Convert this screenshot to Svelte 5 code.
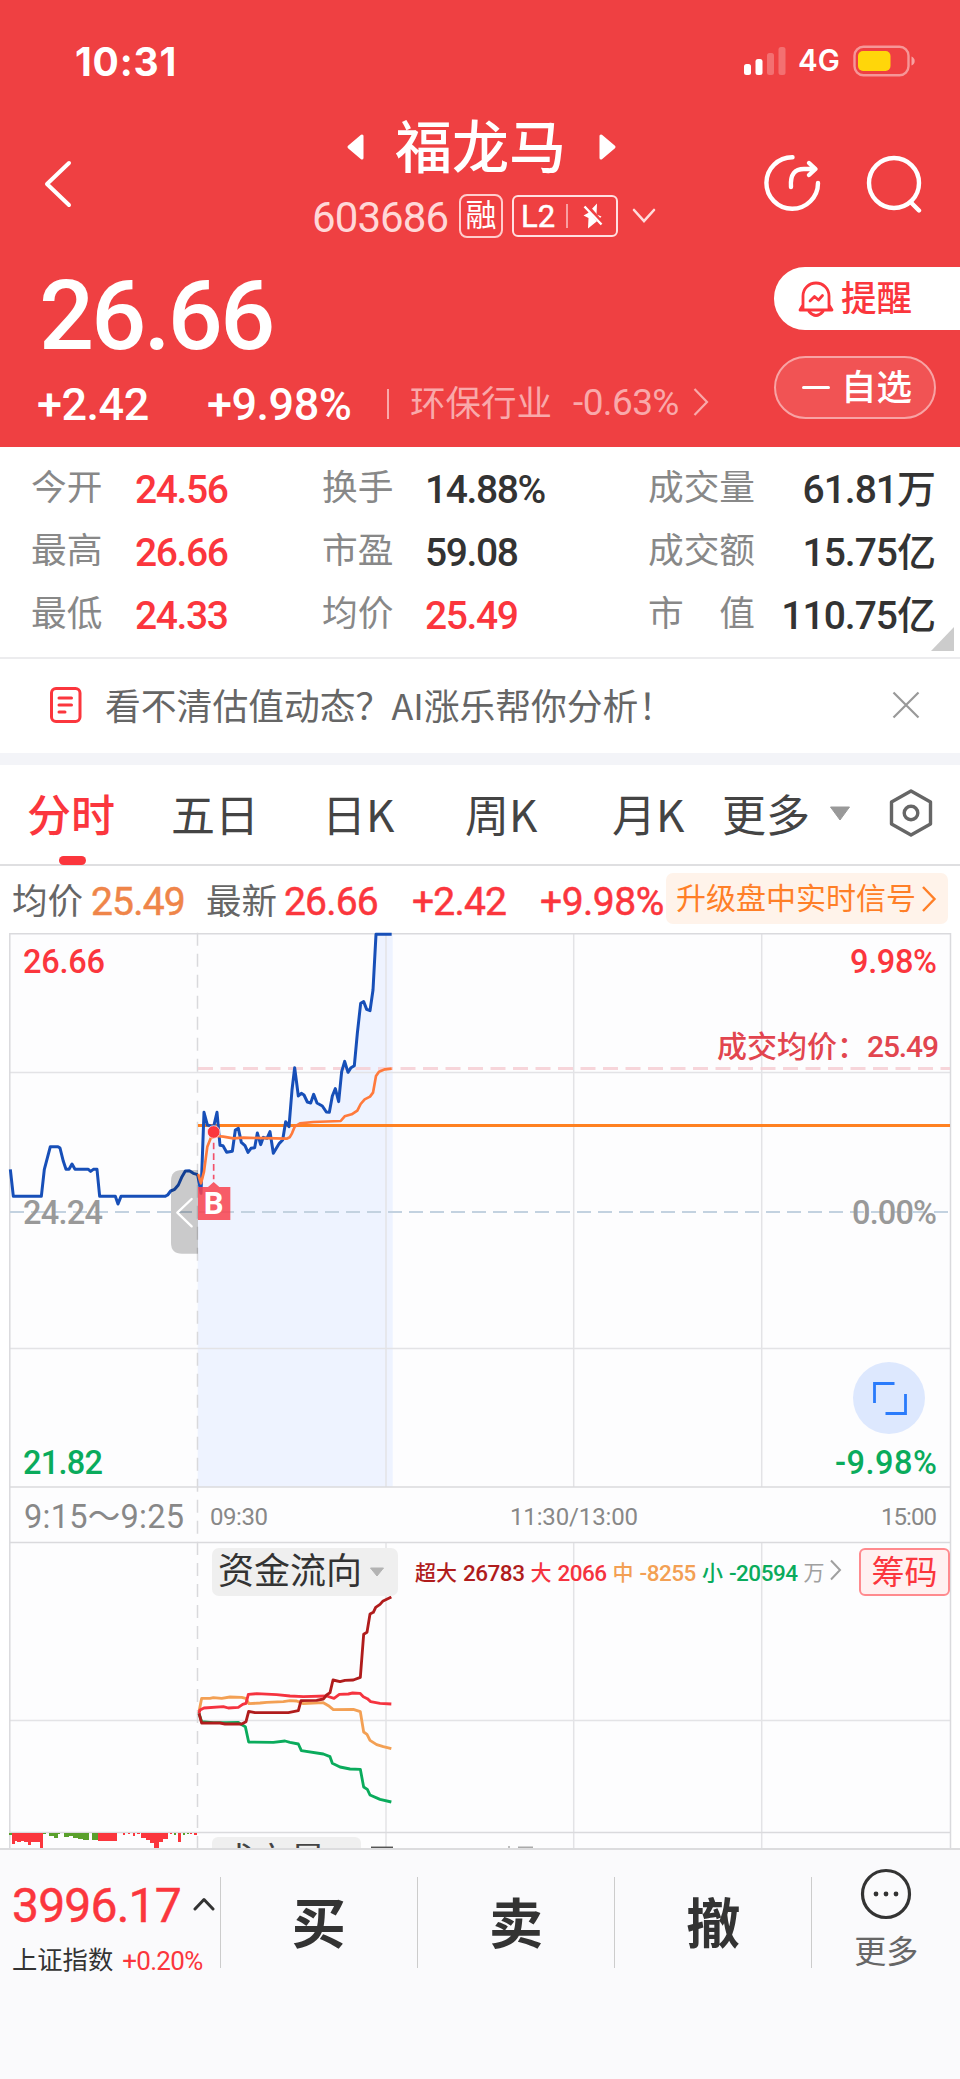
<script>
  const stats = [
    ['今开', '24.56', 'up', '换手', '14.88%', '', '成交量', '61.81万'],
    ['最高', '26.66', 'up', '市盈', '59.08', '', '成交额', '15.75亿'],
    ['最低', '24.33', 'up', '均价', '25.49', 'up', '市　值', '110.75亿']
  ];
  const tabs = ['分时', '五日', '日K', '周K', '月K', '更多'];
  const flows = [
    ['超大', '26783', '#b01c1c'],
    ['大', '2066', '#f5333f'],
    ['中', '-8255', '#f3a054'],
    ['小', '-20594', '#0aab5c']
  ];
  const actions = ['买', '卖', '撤'];

  const auction =
    '31,748 40,829 124,829 133,748 151,680 174,680 180,684 190,724 198,748 207,748 216,732 225,748 265,748 272,754 280,748 291,748 299,829 346,829 354,852 363,829 495,829 503,825 512,813 524,808 535,795 546,770 556,753 568,752 580,760 593,764';
  const price =
    '593,764 603,820 612,577 622,615 641,620 651,577 660,676 669,677 680,697 697,694 706,630 715,625 724,667 735,677 744,697 753,685 764,683 772,639 782,674 790,652 801,655 810,635 820,700 838,670 848,660 857,605 867,620 876,510 884,443 895,528 904,520 912,525 922,546 932,549 941,523 951,549 967,558 979,576 988,577 997,528 1006,506 1016,545 1025,455 1034,424 1044,457 1053,443 1063,437 1072,340 1082,250 1091,245 1100,268 1110,272 1119,210 1128,43 1175,43';
  const average =
    '594,762 603,790 612,755 622,680 632,655 650,648 670,650 700,655 730,653 860,656 869,652 876,640 884,620 900,610 940,606 1022,603 1034,589 1055,583 1072,572 1082,552 1094,538 1110,530 1119,518 1128,468 1137,455 1155,448 1175,446';
  const flowLines = [
    ['#0aab5c', '57,520 65,545 100,548 140,548 175,547 183,553 196,560 206,606 280,607 315,603 330,607 355,612 364,632 430,642 450,650 457,670 480,681 510,687 541,688 551,741 562,748 570,765 600,778 634,786'],
    ['#f3a054', '57,515 65,475 90,475 100,473 125,475 150,471 185,472 197,475 207,491 240,489 260,487 310,485 330,482 350,483 370,491 430,488 448,499 460,509 520,508 541,515 551,576 561,583 570,601 590,614 610,620 634,626'],
    ['#f5333f', '57,520 60,510 72,504 130,500 145,504 175,502 188,493 198,490 205,463 230,461 290,464 330,468 370,470 440,468 462,475 478,463 505,462 518,459 540,460 550,470 562,476 572,485 600,490 634,492'],
    ['#b01c1c', '57,520 65,549 120,549 135,552 185,552 198,545 206,514 225,518 325,518 355,512 363,482 410,481 430,477 440,465 450,458 459,420 480,425 495,421 520,420 541,412 551,283 561,277 570,222 580,217 587,202 600,193 608,184 634,171']
  ];
  const red = '#fb363d';
  const green = '#5aa02c';
  const volumes = [
    [9, 3, 2, green], [12, 3, 11, red], [15, 2, 8, red], [17, 4, 9, red], [21, 3, 8, red], [24, 4, 9, red],
    [28, 3, 12, red], [31, 9, 9, red], [40, 3, 15, red], [43, 3, 1, green], [49, 5, 3, green], [54, 4, 5, green],
    [58, 2, 1, green], [64, 5, 4, green], [69, 4, 3, green], [73, 5, 5, green], [78, 5, 6, green], [83, 6, 7, green],
    [92, 6, 7, green], [98, 19, 8, red], [123, 2, 2, red], [128, 2, 1, red], [133, 2, 3, red], [137, 3, 1, red],
    [141, 5, 5, red], [146, 4, 7, red], [150, 4, 10, red], [154, 5, 15, red], [159, 4, 9, red], [163, 5, 6, red],
    [170, 2, 1, red], [174, 2, 2, green], [178, 3, 9, red], [183, 2, 2, green], [187, 2, 1, green], [190, 2, 1, red], [194, 3, 2, red]
  ];
</script>

<main>
  <header>
    <div class="status">
      <span class="time">10:31</span>
      <div class="signals">
        <svg width="42" height="30" viewBox="744 46 42 30" fill="#fff">
          <rect x="744" y="64" width="7" height="11" rx="2.5" />
          <rect x="755.5" y="59" width="7" height="16" rx="2.5" />
          <rect x="767" y="53" width="7" height="22" rx="2.5" opacity=".25" />
          <rect x="778.5" y="47" width="7" height="28" rx="2.5" opacity=".25" />
        </svg>
        <span class="net">4G</span>
        <svg width="62" height="32" viewBox="853 45 62 32">
          <rect x="854.5" y="46.8" width="54" height="28.4" rx="9" fill="none" stroke="#fff" stroke-opacity=".45" stroke-width="2.4" />
          <rect x="858" y="51" width="32.5" height="20" rx="5" fill="#ffd60a" />
          <path d="M911.5 56.5q3.2 1.5 3.2 4.5t-3.2 4.500z" fill="#fff" opacity=".5" />
        </svg>
      </div>
    </div>

    <div class="nav">
      <svg class="back" width="32" height="52" viewBox="42 158 32 52" fill="none" stroke="#fff" stroke-width="4" stroke-linecap="round" stroke-linejoin="round">
        <path d="M69 163 47 184l22 21" />
      </svg>
      <div class="center">
        <div class="title">
          <svg width="20" height="28" viewBox="0 0 20 28"><path d="M16 3v22L3 14z" fill="#fff" stroke="#fff" stroke-width="3" stroke-linejoin="round" /></svg>
          <h1>福龙马</h1>
          <svg width="20" height="28" viewBox="0 0 20 28"><path d="M4 3v22l13-11z" fill="#fff" stroke="#fff" stroke-width="3" stroke-linejoin="round" /></svg>
        </div>
        <div class="code">
          <span class="num">603686</span>
          <span class="badge">融</span>
          <span class="level">
            <b>L2</b><i></i>
            <svg width="20" height="26" viewBox="0 0 20 26">
              <path d="M14 .5 5 10l-4.500 2.500 5 2.500-.5 10.500L13 19l5.500-5.500-5-2z" fill="#fff" />
              <path d="M2.500 1.500 19 20.500" stroke="#ef4042" stroke-width="4.500" />
              <path d="M1.500 3.500 18.500 21.500" stroke="#fff" stroke-width="2.400" />
            </svg>
          </span>
          <svg width="24" height="16" viewBox="0 0 24 16" fill="none" stroke="#ffdcdc" stroke-width="2.600" stroke-linecap="round"><path d="m2 2 10 11L22 2" /></svg>
        </div>
      </div>
      <div class="tools">
        <svg width="60" height="60" viewBox="762 153 60 60" fill="none" stroke="#fff" stroke-width="4.400" stroke-linecap="round" stroke-linejoin="round">
          <path d="M792.500 157.200A25.800 25.800 0 1 0 818 183" />
          <path d="M791 187c-1-13 4-18 13-18h11M809 163l6.500 6-6.500 6" />
        </svg>
        <svg width="60" height="60" viewBox="865 153 60 60" fill="none" stroke="#fff" stroke-width="4.400" stroke-linecap="round">
          <circle cx="894" cy="183" r="25" /><path d="m911.500 203 7.500 7.500" />
        </svg>
      </div>
    </div>

    <div class="quote">
      <div>
        <div class="price num">26.66</div>
        <div class="change">
          <span class="num">+2.42</span>
          <span class="num">+9.98%</span>
          <i></i>
          <span class="sector">环保行业</span>
          <span class="num pct">-0.63%</span>
          <svg width="16" height="30" viewBox="0 0 16 30" fill="none" stroke="#f9a9aa" stroke-width="2.200"><path d="m1.500 2 12.500 13-12.500 13" /></svg>
        </div>
      </div>
      <div class="pills">
        <button class="alert">
          <svg width="36" height="38" viewBox="0 0 36 38" fill="none" stroke="#fb363d" stroke-width="2.800" stroke-linecap="round" stroke-linejoin="round">
            <path d="M5 29V16a13 13 0 0 1 26 0v13M5 25l-3 5h32l-3-5" /><path d="M11 31.500q7 8 14 0" /><path d="m12 21 4.500-4.500 4 3.500 4-4.500" />
          </svg>
          提醒
        </button>
        <button class="fav"><i></i>自选</button>
      </div>
    </div>
  </header>

  <section class="stats">
    {#each stats as s}
      <span>{s[0]}</span><b class={s[2]}>{s[1]}</b>
      <span>{s[3]}</span><b class={s[5]}>{s[4]}</b>
      <span>{s[6]}</span><b class="end">{s[7]}</b>
    {/each}
    <i class="corner"></i>
  </section>

  <section class="tip">
    <svg width="34" height="38" viewBox="0 0 34 38" fill="none" stroke="#fb363d" stroke-width="3" stroke-linecap="round">
      <rect x="2.500" y="2.500" width="28.500" height="33" rx="4.500" /><path d="M10 12h12.500M10 19h12.500M10 26h6" />
    </svg>
    <p>看不清估值动态？AI涨乐帮你分析！</p>
    <svg width="28" height="28" viewBox="0 0 28 28" stroke="#999" stroke-width="2.200"><path d="m1.500 1.500 25 25M26.500 1.500l-25 25" /></svg>
  </section>

  <nav class="tabs">
    {#each tabs as t, i}<span class:active={i === 0}>{t}</span>{/each}
    <svg class="tri" width="22" height="15" viewBox="0 0 22 15"><path d="M1.500 1h19L11 14z" fill="#999" stroke="#999" stroke-linejoin="round" /></svg>
    <svg width="44" height="48" viewBox="0 0 44 48" fill="none" stroke="#666" stroke-width="3.400" stroke-linejoin="round">
      <path d="M22 2 41.500 13v22L22 46 2.500 35V13z" /><circle cx="22" cy="24" r="6.800" />
    </svg>
  </nav>

  <section class="latest">
    <span>均价</span><b class="avg">25.49</b>
    <span>最新</span><b>26.66</b><b>+2.42</b><b class="wide">+9.98%</b>
    <a class="upgrade" href="#signal">升级盘中实时信号<svg width="16" height="28" viewBox="0 0 16 28" fill="none" stroke="#ff7f27" stroke-width="2.400"><path d="m2 2 11.500 12L2 26" /></svg></a>
  </section>

  <section class="chart">
    <svg width="960" height="917" viewBox="0 931 960 917">
      <rect x="10" y="934" width="940" height="914" fill="#fdfdfe" />
      <g transform="translate(0 920) scale(.333333)">
        <path d="M{price} 1178,43 1178,1700 593,1700z" fill="#eef3ff" />
      </g>
      <g stroke="#e3e3e6" stroke-width="1.500" fill="none">
        <path d="M386 934v553M573.700 934v553M761.700 934v553M386 1542v306M573.700 1542v306M761.700 1542v306M10 1072.500h940M10 1348.500h940M10 1720.500h940" />
        <path d="M197.500 932.700V1542" stroke-dasharray="13 8" stroke="#d9d9dc" /><path d="M197.500 1542v306" stroke-dasharray="13 8" stroke="#d9d9dc" />
        <path d="M9.800 1848V933.800h940.700V1848M10 1487h940M10 1542.500h940M10 1832.500h940" stroke="#dadadd" />
      </g>
      <path d="M198 1068.500h752" stroke="#f7cfd4" stroke-width="3" stroke-dasharray="15 7.500" opacity=".85" />
      <path d="M10 1212h940" stroke="#c3d2e0" stroke-width="2" stroke-dasharray="14 7" />
      <path d="M198 1125.500h752" stroke="#ff8121" stroke-width="3" />

      <g class="lbl">
        <text x="23" y="972.500" fill="#fb363d" textLength="82">26.66</text>
        <text x="23" y="1223.500" fill="#999" textLength="80">24.24</text>
        <text x="23" y="1473.500" fill="#0aab5c" textLength="80">21.82</text>
        <text x="850" y="972.500" fill="#fb363d" textLength="87">9.98%</text>
        <text x="852" y="1223.500" fill="#999" textLength="85">0.00%</text>
        <text x="835" y="1473.500" fill="#0aab5c" textLength="102">-9.98%</text>
        <text x="24" y="1528" fill="#888" textLength="160" class="thin">9:15～9:25</text>
        <text x="210" y="1525" fill="#888" textLength="58" class="small">09:30</text>
        <text x="510" y="1525" fill="#888" textLength="128" class="small">11:30/13:00</text>
        <text x="881" y="1525" fill="#888" textLength="56" class="small">15:00</text>
        <text x="717" y="1056.500" fill="#e2454f" class="mid">成交均价：</text>
        <text x="867" y="1056.500" fill="#e2454f" textLength="72" class="mid">25.49</text>
      </g>

      <g transform="translate(0 920) scale(.333333)" fill="none" stroke-linejoin="round" stroke-width="9">
        <path d="M{auction}" stroke="#174fb8" />
        <path d="M{price}" stroke="#174fb8" />
        <path d="M{average}" stroke="#ff7a3c" stroke-width="8" />
        <path d="M641 668v110" stroke="#f2506a" stroke-width="5" stroke-dasharray="20 12" />
        <path d="M594 801h30l17-15 17 15h33v99h-97z" fill="#f8424f" fill-opacity=".86" stroke="none" />
        <circle cx="641" cy="636" r="19" fill="#fb363d" stroke="#fff" stroke-opacity=".7" stroke-width="3" />
        <path d="M594 750h-48q-33 0-33 33v185q0 33 33 33h48z" fill="#000" fill-opacity=".2" stroke="none" />
        <path d="m575 837-43 41 43 41" stroke="#fff" stroke-width="7" stroke-linecap="round" />
      </g>
      <text x="213.600" y="1214" text-anchor="middle" class="flag">B</text>

      <circle cx="889" cy="1398" r="36" fill="#dde8fe" />
      <path d="M874.500 1403v-19.500h20M905.500 1394v19.500h-20" fill="none" stroke="#2a7bfb" stroke-width="2.800" />

      <g transform="translate(180 1540) scale(.333333)" fill="none" stroke-width="8.500" stroke-linejoin="round">
        {#each flowLines as [color, pts]}<path d="M{pts}" stroke={color} />{/each}
      </g>

      {#each volumes as [x, w, h, color]}<rect {x} y="1833" width={w} height={h} fill={color} />{/each}
      <rect x="212" y="1837" width="149" height="30" rx="6" fill="#efefef" />
      <text x="218" y="1874" class="vol">成交量</text>
      <path d="M371 1847.300h22" stroke="#555" stroke-width="1.500" />
      <path d="M509 1846v2M518 1847.300h15" stroke="#aaa" stroke-width="1.500" />
    </svg>

    <div class="flow">
      <span class="pick">资金流向<svg width="16" height="10" viewBox="0 0 16 10"><path d="M1.500 1h13L8 9z" fill="#b3b3b3" stroke="#b3b3b3" stroke-linejoin="round" /></svg></span>
      <div class="legend">
        {#each flows as [name, value, color]}
          <span style:color>{name}</span><em style:color>{value}</em>
        {/each}
        <span class="unit">万</span>
        <svg width="13" height="22" viewBox="0 0 13 22" fill="none" stroke="#a0a0a0" stroke-width="2"><path d="m2 1.500 9 9.500-9 9.500" /></svg>
      </div>
      <span class="chips">筹码</span>
    </div>
  </section>

  <footer>
    <div class="index">
      <div class="top"><b>3996.17</b><svg width="22" height="14" viewBox="0 0 22 14" fill="none" stroke="#333" stroke-width="3" stroke-linecap="round" stroke-linejoin="round"><path d="m2 12 9-9.500L20 12" /></svg></div>
      <div class="sub">上证指数<em>+0.20%</em></div>
    </div>
    {#each actions as a}<button>{a}</button>{/each}
    <div class="more">
      <svg width="54" height="54" viewBox="0 0 54 54" fill="#333">
        <circle cx="27" cy="27" r="23.500" fill="none" stroke="#333" stroke-width="3.200" /><circle cx="17" cy="27" r="2.400" /><circle cx="27" cy="27" r="2.400" /><circle cx="37" cy="27" r="2.400" />
      </svg>
      更多
    </div>
  </footer>
</main>

<style>
  :global(body) { background: #fff; }
  * { box-sizing: border-box; }
  main { width: 960px; height: 2079px; overflow: hidden; font-family: Roboto, 'Noto Sans CJK SC', sans-serif; color: #333; background: #fff; }
  svg { display: block; flex: none; }
  button { border: 0; background: none; font: inherit; color: inherit; padding: 0; }
  b, em, i { font-style: normal; }

  header { height: 447px; background: #ef4042; color: #fff; }
  .status { height: 94px; padding: 28px 45px 0 75px; display: flex; justify-content: space-between; align-items: center; }
  .time { font: 700 39px/1 Inter, sans-serif; letter-spacing: .8px; }
  .signals { display: flex; align-items: center; }
  .net { font: 600 29.500px/1 Inter, sans-serif; width: 67px; padding-left: 12px; letter-spacing: 0; }
  .nav { height: 173px; display: grid; grid-template-columns: 312px 348px 1fr; }
  .back { margin: 64px 0 0 42px; }
  .center { padding-top: 18px; }
  .title { height: 70px; margin-left: 34px; display: flex; align-items: center; }
  h1 { margin: 0 30px 0 29px; padding-top: 3px; font-size: 57px; line-height: 70px; font-weight: 500; width: 172px; }
  .code { height: 44px; margin-top: 12px; display: flex; align-items: center; }
  .code .num { font-size: 42px; letter-spacing: -.9px; width: 147px; color: #ffd8d8; padding-top: 3px; }
  .badge { width: 44px; height: 44px; border: 2px solid #ffcdcd; border-radius: 8px; font-size: 31px; line-height: 40px; text-align: center; }
  .level { width: 106px; height: 42px; margin: 0 14px 0 9px; border: 2px solid #ffe0e0; border-radius: 6px; display: flex; align-items: center; padding-left: 7px; }
  .level b { font-size: 31px; font-weight: 400; -webkit-text-stroke: .5px; width: 45px; line-height: 38px; padding-top: 1px; }
  .level i { width: 2px; height: 24px; background: #f9a0a1; margin-right: 15px; }
  .tools { display: flex; gap: 43px; padding: 59px 0 0 102px; }

  .quote { height: 180px; display: flex; justify-content: space-between; }
  .price { height: 95px; padding: 2px 0 0 39px; font-size: 97px; line-height: 95px; font-weight: 500; letter-spacing: -2.800px; }
  .change { height: 84px; padding-left: 37px; display: grid; grid-template-columns: 170px 180px 23px 163px 120px 20px; align-items: center; font-size: 45px; font-weight: 500; letter-spacing: -.5px; white-space: nowrap; }
  .change i { width: 2px; height: 30px; background: #f9a9aa; }
  .change .sector { font-size: 35.500px; font-weight: 400; letter-spacing: 0; color: #f9a9aa; padding-bottom: 7px; }
  .change .pct { font-size: 37px; font-weight: 400; color: #f9a9aa; letter-spacing: -.6px; padding-bottom: 3px; }
  .change svg { margin-top: -4px; }
  .pills { width: 186px; display: flex; flex-direction: column; gap: 26px; }
  .pills button { height: 63px; display: flex; align-items: center; font-size: 35.500px; font-weight: 500; line-height: 60px; }
  .alert { border-radius: 31px 0 0 31px; background: #fff; color: #fb363d; padding-left: 24px; gap: 7px; }
  .fav { width: 162px; border-radius: 32px; background: #f15354; border: 2px solid #f8a3a4; padding-left: 26px; gap: 11px; }
  .fav i { width: 28px; height: 3.500px; border-radius: 2px; background: #fff; }

  .stats { position: relative; height: 212px; padding: 9px 25px 0 31px; border-bottom: 2px solid #ececee; display: grid; grid-template-columns: 104px 187px 103px 223px 107px 1fr; grid-template-rows: repeat(3, 63px); align-items: center; align-content: start; }
  .stats span { font-size: 35.700px; line-height: 60px; color: #888; white-space: nowrap; }
  .stats b { font-size: 39px; line-height: 56px; font-weight: 500; letter-spacing: -1.400px; padding-top: 5px; white-space: nowrap; }
  .stats .up { color: #fb363d; }
  .stats .end { text-align: right; margin-left: -30px; letter-spacing: -1px; }
  .corner { position: absolute; right: 6px; bottom: 6px; border-left: 23px solid transparent; border-bottom: 24px solid #ccc; }

  .tip { height: 106px; padding: 0 40px 2px 49px; border-bottom: 12px solid #f3f4f8; display: flex; align-items: center; }
  .tip p { flex: 1; margin: -3px 0 0 22px; font: 400 35.800px/60px 'Noto Sans CJK SC', sans-serif; color: #666; }

  .tabs { height: 101px; padding: 0 0 3px 27px; border-bottom: 2px solid #dfdfe1; display: grid; grid-template-columns: 144px 151px 143px 147px 110px 107px 60px 44px; align-items: center; font: 400 44px/94px 'Noto Sans CJK SC', sans-serif; color: #444; white-space: nowrap; }
  .active { position: relative; color: #fb363d; font-weight: 500; }
  .active::after { content: ''; position: absolute; left: 32px; bottom: -5px; width: 27px; height: 9px; border-radius: 5px; background: #fb363d; }

  .latest { height: 65px; padding: 0 12px 0 12px; display: grid; grid-template-columns: 79px 115px 78px 128px 128px 126px 282px; align-items: center; font-size: 35.500px; color: #666; white-space: nowrap; }
  .latest b { font-size: 39px; font-weight: 400; -webkit-text-stroke: .5px; letter-spacing: -.8px; color: #fb363d; padding-top: 6px; }
  .latest .avg { color: #ef8549; }
  .latest .wide { letter-spacing: -.500px; }
  .upgrade { height: 51px; background: #fff3ea; border-radius: 7px; color: #ff7f27; font-size: 30px; line-height: 53px; text-decoration: none; display: flex; align-items: center; padding-left: 10px; gap: 5px; }

  .chart { position: relative; height: 917px; }
  .lbl { font-size: 32.500px; font-weight: 500; }
  .lbl .thin { font-weight: 400; }
  .lbl .small { font-size: 24px; font-weight: 400; }
  .lbl .mid { font-size: 30px; }
  .flag { font: 700 31px Roboto, sans-serif; fill: #fff; }
  .vol { font-size: 36px; fill: #444; }
  .flow { position: absolute; left: 212px; top: 617px; width: 738px; height: 48px; display: flex; align-items: center; justify-content: space-between; white-space: nowrap; }
  .pick { width: 186px; height: 48px; border-radius: 7px; background: #efefef; padding-left: 6px; font-size: 36px; line-height: 46px; display: flex; align-items: center; gap: 7px; }
  .legend { flex: 1; margin-left: 17px; padding-top: 2px; display: flex; align-items: center; font-size: 21px; line-height: 24px; font-weight: 500; }
  .legend em { font-size: 22.500px; letter-spacing: -.5px; margin: 0 6px 0 6px; }
  .legend .unit { color: #a0a0a0; font-weight: 400; }
  .legend svg { margin: -6px 0 0 4px; }
  .chips { width: 91px; height: 48px; border: 2px solid #ff8a8e; border-radius: 6px; background: #fff0f0; color: #fb363d; font-size: 33px; line-height: 46px; text-align: center; }

  footer { height: 231px; background: #fafafc; border-top: 2px solid #dcdcde; padding-top: 27px; display: grid; grid-template-columns: 219.500px 197.300px 197.300px 197.300px 148.600px; align-items: start; }
  .index { padding: 0 0 0 12px; }
  .top { display: flex; align-items: center; height: 56px; gap: 13px; }
  .top b { font-size: 48px; line-height: 56px; font-weight: 400; -webkit-text-stroke: .5px; letter-spacing: -.8px; padding-top: 2px; color: #fb363d; width: 168px; }
  .top svg { margin-top: -3px; }
  .sub { margin-top: 12px; display: flex; align-items: center; font-size: 25.300px; line-height: 32px; white-space: nowrap; }
  .sub em { margin-left: 9px; color: #fb363d; font-size: 26px; letter-spacing: -.700px; }
  footer button { height: 91px; font-weight: 700; font-size: 54px; line-height: 91px; padding-top: 3px; border-left: 1.500px solid #ccc; }
  .more { height: 91px; border-left: 1.500px solid #ccc; display: flex; flex-direction: column; align-items: center; font-size: 32px; line-height: 44px; color: #666; }
  .more svg { margin: -10px 0 9px; }
</style>
